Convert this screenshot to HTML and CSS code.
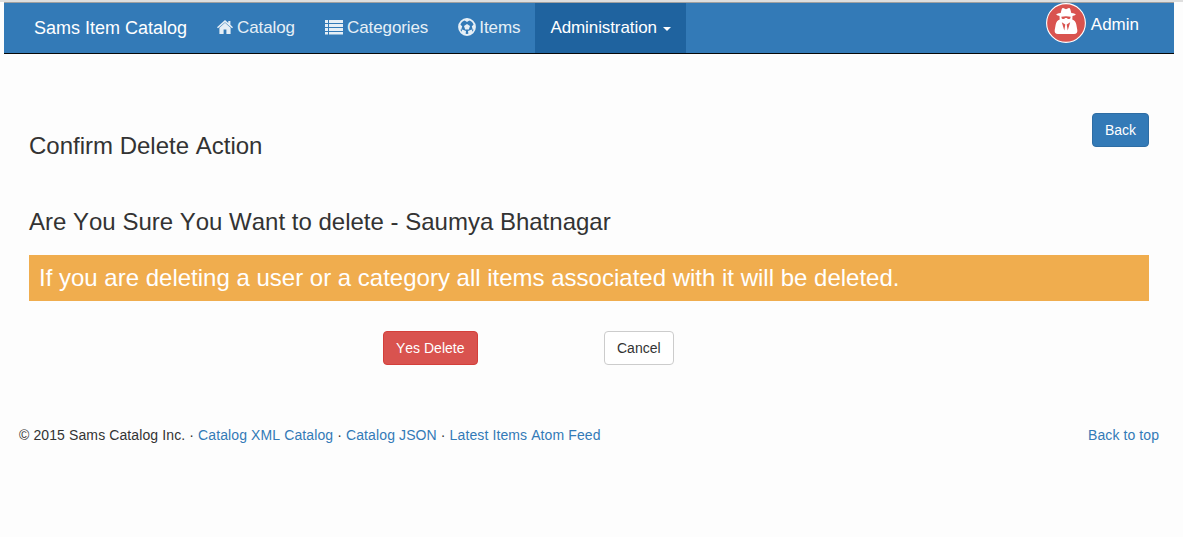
FILE: index.html
```html
<!DOCTYPE html>
<html lang="en">
<head>
<meta charset="utf-8">
<title>Sams Item Catalog</title>
<link rel="stylesheet" href="styles.css">
</head>
<body>
<nav class="navbar">
  <a class="brand">Sams Item Catalog</a>
  <a class="nav-link"><svg class="icon home" viewBox="0 0 16 14"><path d="M8 0 0 7.200l1 1.100L8 2.200l7 6.100 1-1.100-2.600-2.400V1h-2.100v1.900z"/><path d="M8 2.800 2.400 7.800V14h4.200V9.600h2.800V14h4.200V7.800z"/></svg>Catalog</a>
  <a class="nav-link"><svg class="icon list" viewBox="0 0 18 15"><path d="M0 0h3v3H0zM4 0h14v3H4zM0 4h3v3H0zM4 4h14v3H4zM0 8h3v3H0zM4 8h14v3H4zM0 12h3v2.500H0zM4 12h14v2.500H4z"/></svg>Categories</a>
  <a class="nav-link"><svg class="icon ball" viewBox="0 0 18 18"><circle cx="9" cy="9" r="8" fill="none" stroke="currentColor" stroke-width="1.800"/><path d="m9 5.900 3 2.200-1.200 3.500H7.200L6 8.100z"/><path d="M5.300 1.500 9 4l3.700-2.500L9 .5zM17 5.500l-3.200 2.800 1.100 4 2.100-2zM14.800 15l-1-3.600-3.800 1.700.5 3.900zM3.200 15l1-3.600L8 13.100 7.500 17zM1 5.500l3.200 2.800-1.100 4-2.100-2z"/></svg>Items</a>
  <a class="nav-link active">Administration<span class="caret"></span></a>
  <a class="user">
    <svg class="avatar" viewBox="0 0 40 40"><circle cx="20" cy="20" r="19.400" fill="#d9534f" stroke="#fff" stroke-width="1.100"/><path fill="#fff" d="M14.700 10 15.600 6.500q.6-1.900 2.200-1.200l2.200.9 2.200-.9q1.600-.7 2.200 1.200l.9 3.500q4.400.5 4.400 1.500 0 .8-3.200 1.400l-.2 3.600q3.200 1.200 4 5l1 5.500q.5 4-3.300 4H12q-3.800 0-3.300-4l1-5.500q.8-3.800 4-5l-.2-3.600q-3.200-.6-3.200-1.400 0-1 4.400-1.500z"/><path fill="#d9534f" d="M15.300 13.700q4.700-.7 9.400 0l-.5 1.700q-2.200 1.200-3.400-.4h-1.600q-1.200 1.600-3.400.4zM15.800 19.300l3.500 2.200-1 6zM24.200 19.300l-3.500 2.200 1 6z"/></svg>
    <span>Admin</span>
  </a>
</nav>
<main class="content">
  <header class="page-head"><h3>Confirm Delete Action</h3><a class="btn primary">Back</a></header>
  <h3 class="question">Are You Sure You Want to delete - Saumya Bhatnagar</h3>
  <div class="warning">If you are deleting a user or a category all items associated with it will be deleted.</div>
  <div class="actions"><a class="btn danger">Yes Delete</a><a class="btn">Cancel</a></div>
</main>
<footer class="footer">
  <p>© 2015 Sams Catalog Inc. · <a>Catalog XML Catalog</a> · <a>Catalog JSON</a> · <a>Latest Items Atom Feed</a></p>
  <a class="top">Back to top</a>
</footer>
</body>
</html>
```
FILE: styles.css
```css
* { box-sizing: border-box; }
body {
  margin: 0;
  height: 537px;
  overflow: hidden;
  border-top: 2px solid #dedede;
  background: #fdfdfd;
  color: #333;
  font: 14px/20px "Liberation Sans", Arial, sans-serif;
  font-kerning: none;
}
.navbar {
  display: flex;
  height: 52px;
  margin: 0 9px 0 4px;
  padding-left: 15px;
  background: #337ab7;
  border-top: 1px solid #a0a0a0;
  border-bottom: 1px solid #080808;
  color: #fff;
  font-size: 17px;
}
.brand { padding: 15px; font-size: 18px; width: 183px; white-space: nowrap; }
.nav-link { display: flex; align-items: center; padding: 0 15px; height: 50px; color: #e6eff6; letter-spacing: -0.09px; }
.nav-link.active { background: #1f639f; color: #fff; }
.icon { fill: currentColor; margin-right: 4px; }
.home { width: 16px; height: 14px; margin-top: -2px; }
.list { width: 18px; height: 15px; margin-top: -1px; }
.ball { width: 18px; height: 18px; margin-right: 3px; margin-top: -2px; }
.caret { margin: 1px 0 0 6px; border: 4px solid transparent; border-top-color: currentColor; border-bottom: 0; }
.user { display: flex; align-items: center; gap: 5px; height: 40px; margin: 0 35px 0 auto; }
.user span { padding-top: 3px; }
.avatar { width: 40px; height: 40px; }
.content { padding: 59px 34px 0 29px; }
h3 { margin: 0; font-size: 24px; line-height: 26px; font-weight: 400; }
.page-head { display: flex; justify-content: space-between; align-items: flex-start; }
.page-head h3 { padding-top: 20px; }
.question { margin-top: 50px; }
.warning { margin-top: 20px; padding: 10px; background: #f0ad4e; color: #fff; font-size: 24px; line-height: 26px; }
.btn { padding: 6px 12px; border: 1px solid #ccc; border-radius: 4px; background: #fff; }
.btn.primary { background: #337ab7; border-color: #2e6da4; color: #fff; }
.btn.danger { width: 95px; background: #d9534f; border-color: #d43f3a; color: #fff; }
.actions { display: flex; gap: 126px; margin: 30px 0 0 354px; }
.footer { display: flex; justify-content: space-between; padding: 60px 24px 0 19px; }
.footer p { margin: 0; letter-spacing: 0.11px; }
.footer a { color: #337ab7; }
.top { letter-spacing: 0.08px; }
```
